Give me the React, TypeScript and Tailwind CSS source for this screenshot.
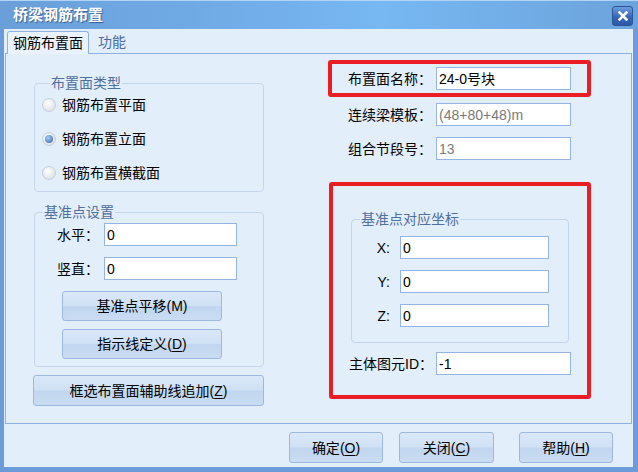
import React from "react";

const FONT = "font-['Liberation_Sans','Noto_Sans_CJK_SC',sans-serif]";
const BTN =
  "flex items-center justify-center rounded-[3px] border border-[#9db8de] bg-[linear-gradient(to_bottom,#dae8f8_0%,#d0e1f5_48%,#c1d6ef_52%,#c9dcf2_100%)] text-[14px] leading-[18px] text-black";

function Mn({ k, plain }: { k: string; plain?: boolean }) {
  return (
    <span>
      (<span className={plain ? "" : "underline underline-offset-2"}>{k}</span>)
    </span>
  );
}

function Field({ value, muted, w }: { value: string; muted?: boolean; w: string }) {
  return (
    <div
      className={`${w} flex h-[23px] items-center border border-[#94b5e2] bg-white pl-[2px] text-[14px] leading-[18px] ${
        muted ? "text-[#7a7a7a]" : "text-black"
      }`}
    >
      {value}
    </div>
  );
}

function Radio({ checked, label }: { checked?: boolean; label: string }) {
  return (
    <div className="flex h-[18px] items-center gap-[6px]">
      <span className="flex h-[14px] w-[14px] items-center justify-center rounded-full border border-[#c3cfdf] bg-[radial-gradient(circle_at_40%_35%,#ffffff,#d3d8df)]">
        {checked ? (
          <span className="h-[8px] w-[8px] rounded-full bg-[radial-gradient(circle_at_40%_35%,#a9d0f6,#2b5da6)]" />
        ) : null}
      </span>
      <span className="text-[14px] leading-[18px] text-black">{label}</span>
    </div>
  );
}

// legend is 18px tall; the box line sits at its middle and content starts below it
function Group({
  title,
  className,
  children,
}: {
  title: string;
  className: string;
  children: React.ReactNode;
}) {
  return (
    <fieldset className={`rounded-[4px] border border-[#c6d6ea] ${className}`}>
      <legend className="ml-[8px] h-[18px] px-[1px] text-[14px] leading-[18px] text-[#4f6f9c]">
        {title}
      </legend>
      {children}
    </fieldset>
  );
}

export default function App() {
  return (
    <div className={`${FONT} flex h-[472px] w-[638px] flex-col bg-[#e3eefb]`}>
      {/* title bar */}
      <div className="flex h-[29px] items-center justify-between border-t border-[#b4d4f6] bg-[linear-gradient(to_right,#6a9fd9_0%,#72aee9_40%,#77b8f2_60%,#6ca3dc_100%)] pl-[13px] pr-[5px]">
        <span className="text-[15px] font-bold leading-[18px] text-white [text-shadow:1px_1px_1px_#3a5f92]">
          桥梁钢筋布置
        </span>
        <div className="mt-[1px] flex h-[20px] w-[21px] items-center justify-center rounded-[3px] border border-[#2e5498] bg-[linear-gradient(to_bottom,#6a9de0,#3766b6_55%,#2d58a7)]">
          <svg width="10" height="10" viewBox="0 0 10 10">
            <path d="M1.5 1.5 L8.5 8.5 M8.5 1.5 L1.5 8.5" stroke="white" strokeWidth="2.6" strokeLinecap="square" />
          </svg>
        </div>
      </div>

      {/* body */}
      <div className="flex flex-1 flex-col border-x-[4px] border-b-[5px] border-r-[5px] border-[#6b9cd9]">
        {/* tabs */}
        <div className="flex h-[24px] items-end pl-[3px]">
          <div className="relative z-10 -mb-px flex h-[23px] items-center rounded-t-[3px] border border-b-0 border-[#8db2e2] bg-[#e9f2fd] px-[5px] text-[14px] leading-[18px] text-black">
            钢筋布置面
          </div>
          <div className="flex h-[23px] items-center px-[9px] text-[14px] leading-[18px] text-[#4a6aa0]">
            功能
          </div>
        </div>

        {/* panel */}
        <div className="mx-[1px] flex h-[371px] border border-[#8db2e2] pl-[27px]">
          {/* left column */}
          <div className="flex w-[231px] flex-col pt-[20px]">
            <Group title="布置面类型" className="ml-[1px] flex w-[230px] flex-col gap-[16px] pl-[7px] pt-[4px] pb-[9px]">
              <Radio label="钢筋布置平面" />
              <Radio checked label="钢筋布置立面" />
              <Radio label="钢筋布置横截面" />
            </Group>

            <Group title="基准点设置" className="ml-[1px] mt-[11px] w-[230px] pt-[2px] pb-[7px]">
              <div className="flex items-center pl-[22px]">
                <span className="w-[47px] text-[14px] leading-[18px] text-black">水平：</span>
                <Field value="0" w="w-[133px]" />
              </div>
              <div className="mt-[11px] flex items-center pl-[22px]">
                <span className="w-[47px] text-[14px] leading-[18px] text-black">竖直：</span>
                <Field value="0" w="w-[133px]" />
              </div>
              <div className="mt-[11px] pl-[27px]">
                <div className={`${BTN} h-[30px] w-[160px]`}>
                  基准点平移<Mn k="M" plain />
                </div>
              </div>
              <div className="mt-[8px] pl-[27px]">
                <div className={`${BTN} h-[30px] w-[160px]`}>
                  指示线定义<Mn k="D" />
                </div>
              </div>
            </Group>

            <div className={`${BTN} mt-[8px] h-[31px] w-[231px]`}>
              框选布置面辅助线追加<Mn k="Z" />
            </div>
          </div>

          {/* right column */}
          <div className="ml-[64px] flex w-[263px] flex-col pt-[6px]">
            <div className="flex h-[37px] items-center rounded-[3px] border-[4px] border-[#ea1d25] pl-[16px]">
              <span className="w-[88px] text-[14px] leading-[18px] text-black">布置面名称：</span>
              <Field value="24-0号块" w="w-[135px]" />
            </div>
            <div className="mt-[6px] flex items-center pl-[20px]">
              <span className="w-[88px] text-[14px] leading-[18px] text-black">连续梁模板：</span>
              <Field value="(48+80+48)m" muted w="w-[135px]" />
            </div>
            <div className="mt-[11px] flex items-center pl-[20px]">
              <span className="w-[88px] text-[14px] leading-[18px] text-black">组合节段号：</span>
              <Field value="13" muted w="w-[135px]" />
            </div>

            <div className="ml-[1px] mt-[22px] flex h-[217px] flex-col rounded-[3px] border-[4px] border-[#ea1d25] pl-[18px] pt-[24px]">
              <Group title="基准点对应坐标" className="w-[218px] pt-[8px] pb-[15px]">
                {["X:", "Y:", "Z:"].map((l, i) => (
                  <div key={l} className={`flex items-center ${i > 0 ? "mt-[11px]" : ""}`}>
                    <span className="w-[39px] pr-[1px] text-right text-[14px] leading-[18px] text-black">{l}</span>
                    <div className="ml-[9px]">
                      <Field value="0" w="w-[149px]" />
                    </div>
                  </div>
                ))}
              </Group>
              <div className="mt-[9px] flex items-center">
                <span className="-ml-[2px] w-[87px] text-[14px] leading-[18px] text-black">主体图元ID：</span>
                <Field value="-1" w="w-[135px]" />
              </div>
            </div>
          </div>
        </div>

        {/* footer buttons */}
        <div className="flex flex-1 items-start justify-end pr-[20px] pt-[8px]">
          <div className={`${BTN} h-[31px] w-[94px]`}>
            确定<Mn k="O" />
          </div>
          <div className={`${BTN} ml-[16px] h-[31px] w-[95px]`}>
            关闭<Mn k="C" />
          </div>
          <div className={`${BTN} ml-[25px] h-[31px] w-[94px]`}>
            帮助<Mn k="H" />
          </div>
        </div>
      </div>
    </div>
  );
}
